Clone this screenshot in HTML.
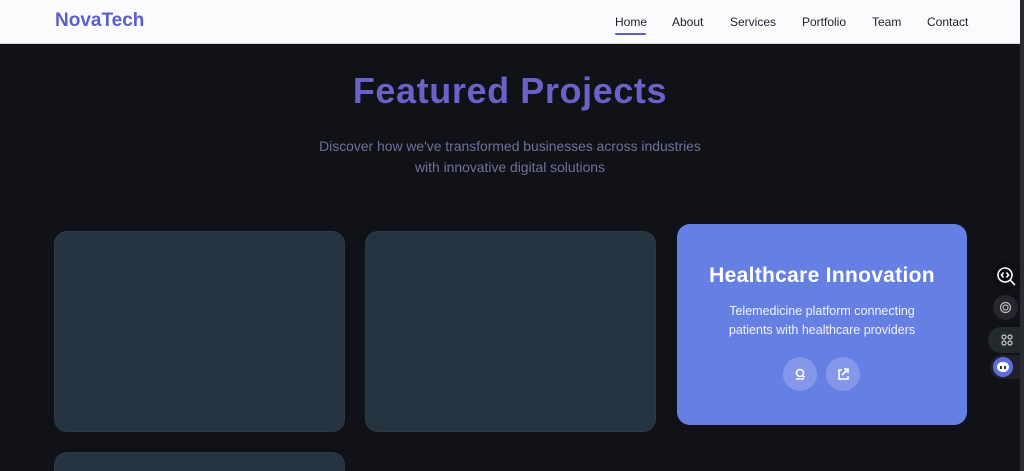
<!DOCTYPE html>
<html style="width:1024px;height:471px;overflow:hidden"><head><meta charset="utf-8"><style>
*{margin:0;padding:0;box-sizing:border-box}
body{width:1024px;height:471px;overflow:hidden;background:#111118;font-family:"Liberation Sans",sans-serif;position:relative}
.nav{position:absolute;left:0;top:0;width:1020px;height:44px;background:#fbfbfd;border-bottom:1px solid #d8d8e4}
.logo{position:absolute;left:55px;top:10px;font-size:19px;font-weight:bold;color:#5b5fc7}
.links{position:absolute;top:15px;left:615px;font-size:12px;color:#1e1e2e}
.links span{position:absolute;white-space:nowrap}
.ul{position:absolute;left:615px;top:33px;width:31px;height:2px;background:#5b5fc7;border-radius:1px}
h1{position:absolute;top:70px;width:1020px;text-align:center;font-size:36px;font-weight:bold;color:#6a62c8;letter-spacing:.6px}
.sub{position:absolute;top:136px;width:1020px;text-align:center;font-size:13.9px;line-height:21px;color:#6c739a}
.card{position:absolute;width:291px;height:201px;background:#243440;border:1px solid #2c3b47;border-radius:13px}
.hc{position:absolute;left:677px;top:224px;width:290px;height:201px;background:#6580e2;border-radius:13px;color:#fff;text-align:center}
.hc h2{margin-top:40px;font-size:21px;font-weight:bold;letter-spacing:.3px}
.hc p{margin-top:14px;font-size:12.5px;line-height:19px;color:#f0f2ff}
.btn{position:absolute;top:133px;width:34px;height:34px;border-radius:50%;background:#8497ea}
.scroll{position:absolute;left:1020px;top:0;width:4px;height:471px;background:#2a2a33}
.side{position:absolute;border-radius:50%}
</style></head><body>
<div class="nav">
<div class="logo">NovaTech</div>
<div class="links" style="left:0">
<span style="left:615px">Home</span><span style="left:672px">About</span><span style="left:730px">Services</span><span style="left:802px">Portfolio</span><span style="left:872px">Team</span><span style="left:927px">Contact</span>
</div>
<div class="ul"></div>
</div>
<h1>Featured Projects</h1>
<div class="sub">Discover how we've transformed businesses across industries<br>with innovative digital solutions</div>
<div class="card" style="left:54px;top:231px"></div>
<div class="card" style="left:365px;top:231px"></div>
<div class="card" style="left:54px;top:452px;height:19px;border-bottom:none;border-radius:13px 13px 0 0"></div>
<div class="hc">
<h2>Healthcare Innovation</h2>
<p>Telemedicine platform connecting<br>patients with healthcare providers</p>
<div class="btn" style="left:106px"><svg width="34" height="34" viewBox="0 0 34 34" fill="none" stroke="#fff" stroke-width="1.6"><circle cx="17" cy="16" r="3.5"/><path d="M19.5 18.5l2 2M13 22h8"/></svg></div>
<div class="btn" style="left:149px"><svg width="34" height="34" viewBox="0 0 34 34" fill="none" stroke="#fff" stroke-width="1.6"><path d="M16 13h-3v9h9v-3M18 12h4v4M22 12l-6 6"/></svg></div>
</div>
<div class="scroll"></div>
<div class="side" style="left:992px;top:262px;width:28px;height:28px;background:#0d0d12"><svg width="28" height="28" viewBox="0 0 28 28" fill="none" stroke="#fff" stroke-width="1.6"><circle cx="13" cy="13" r="7"/><path d="M18 18l5 5M11.5 10.5l-2 2.5 2 2.5M14.5 10.5l2 2.5-2 2.5"/></svg></div>
<div class="side" style="left:993px;top:295px;width:25px;height:25px;background:#26262e"><svg width="25" height="25" viewBox="0 0 25 25" fill="none" stroke="#bbb" stroke-width="1.2"><circle cx="12.5" cy="12.5" r="5"/><circle cx="12.5" cy="12.5" r="2.5"/></svg></div>
<div style="position:absolute;left:988px;top:327px;width:32px;height:26px;border-radius:13px 0 0 13px;background:#222a2e"><svg width="26" height="26" viewBox="0 0 26 26" fill="none" stroke="#ccc" stroke-width="1.2" style="margin-left:6px"><circle cx="10" cy="10" r="2"/><circle cx="16" cy="10" r="2"/><circle cx="10" cy="16" r="2"/><circle cx="16" cy="16" r="2"/></svg></div>
<div style="position:absolute;left:990px;top:355px;width:30px;height:24px;border-radius:12px 0 0 12px;background:#202028"></div>
<div class="side" style="left:993px;top:357px;width:20px;height:20px;background:#5b6ee0"><div style="position:absolute;left:4px;top:5px;width:12px;height:10px;background:#fff;border-radius:5px"></div><div style="position:absolute;left:7px;top:9px;width:2px;height:3px;background:#333"></div><div style="position:absolute;left:11px;top:9px;width:2px;height:3px;background:#333"></div></div>
</body></html>
